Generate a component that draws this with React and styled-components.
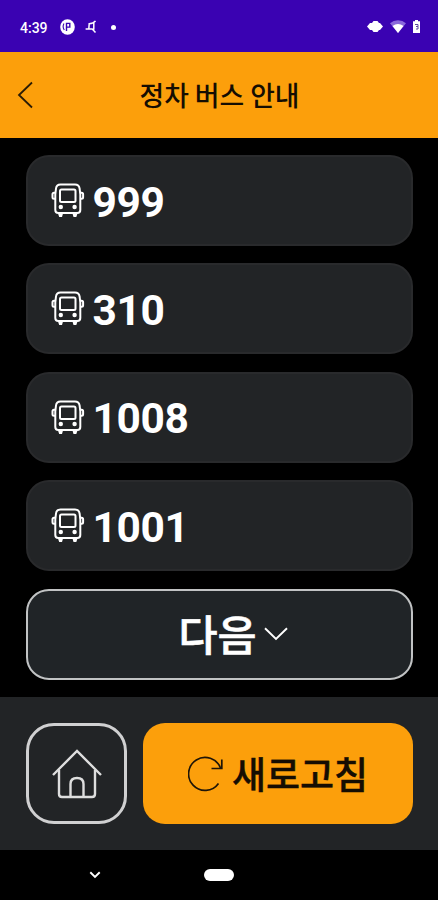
import styled, { createGlobalStyle } from 'styled-components'

const buses = ['999', '310', '1008', '1001']

export default function App() {
  return (
    <>
      <GlobalStyle />
      <Screen>
        <StatusBar>
          <StatusGroup>
            <Clock>4:39</Clock>
            <AppIcon />
            <SignalIcon />
            <StatusDot />
          </StatusGroup>
          <StatusIcons />
        </StatusBar>

        <Header>
          <BackButton aria-label="뒤로">
            <svg width="17" height="28" viewBox="0 0 17 28">
              <path d="M15 1.5 2 14l13 12.5" fill="none" stroke="#2b1c05" strokeWidth="1.8" />
            </svg>
          </BackButton>
          <Title>정차 버스 안내</Title>
        </Header>

        <BusList>
          {buses.map((number) => (
            <BusCard key={number}>
              <BusIcon />
              <BusNumber>{number}</BusNumber>
            </BusCard>
          ))}
          <NextButton>
            <NextLabel>다음</NextLabel>
            <svg width="24" height="14" viewBox="0 0 24 14">
              <path d="M1 1.2 12 12 23 1.2" fill="none" stroke="#fff" strokeWidth="1.9" />
            </svg>
          </NextButton>
        </BusList>

        <Footer>
          <HomeButton aria-label="홈">
            <HomeIcon />
          </HomeButton>
          <RefreshButton>
            <RefreshIcon />
            <RefreshLabel>새로고침</RefreshLabel>
          </RefreshButton>
        </Footer>

        <NavBar>
          <svg width="12" height="8" viewBox="0 0 12 8">
            <path d="M1.3 1.3 6 5.9l4.7-4.6" fill="none" stroke="#fff" strokeWidth="1.9" />
          </svg>
          <NavPill />
          <span />
        </NavBar>
      </Screen>
    </>
  )
}

function AppIcon() {
  return (
    <svg width="15" height="16" viewBox="0 0 15 16">
      <ellipse cx="7.5" cy="8" rx="7.3" ry="7.8" fill="#fff" />
      <path d="M4 4.500c-1.200 2-1 4.500.3 6.500" fill="none" stroke="#3a02b2" strokeWidth="1.1" />
      <path d="M6.500 12V4.400h3.300v3.700H7" fill="none" stroke="#3a02b2" strokeWidth="1.400" />
    </svg>
  )
}

function SignalIcon() {
  return (
    <svg width="12" height="14" viewBox="0 0 12 14">
      <path d="M10.500.8C9.400 2.400 7 3.600 4.200 3.800L3.800 9H.6M3.800 9h3.400l3.300 3.500M8.800 2.300v7.500" fill="none" stroke="#fff" strokeWidth="1.5" />
    </svg>
  )
}

function StatusIcons() {
  return (
    <svg width="54" height="16" viewBox="0 0 54 16">
      <path d="M0 7.500 3 4h2l1.500-2h4L12 4h1l3 3.500-3 3.500h-1l-1.500 2h-4L5 11H3z" fill="#fff" />
      <path d="M23 4.200a12 12 0 0 1 16 0L31 14z" fill="#8a68db" />
      <path d="M25.500 7a9 9 0 0 1 11 0L31 14z" fill="#fff" />
      <path d="M46 2.300h2V1h3v1.300h2V14h-7z" fill="#fff" />
      <path d="M48 5.500h3v2h-2m2 0v2.500h-2" fill="none" stroke="#5b459c" />
    </svg>
  )
}

function BusIcon() {
  return (
    <svg width="34" height="35" viewBox="0 0 34 35" fill="none" stroke="#fff" strokeWidth="2">
      <path d="M9.500 1.500h14.500q4 0 4.600 4l.7 6V27q0 3-3 3h-19q-3 0-3-3V11.500l.7-6q.5-4 4.500-4z" />
      <rect x="9" y="6.500" width="15.500" height="12.500" rx="1.500" />
      <path d="M4.200 9.800H3q-1.500 0-1.500 1.500v3q0 1.500 1.500 1.500h1.200M29.400 9.800h1.200q1.500 0 1.500 1.500v3q0 1.500-1.500 1.500h-1.200" />
      <path d="M7 30.500h5l-1 3.500H8.200zM21.500 30.500h5L25.300 34h-2.800z" fill="#fff" stroke="none" />
      <circle cx="9.800" cy="24" r="2.200" fill="#fff" stroke="none" />
      <circle cx="23.600" cy="24" r="2.200" fill="#fff" stroke="none" />
    </svg>
  )
}

function HomeIcon() {
  return (
    <svg width="50" height="50" viewBox="0 0 50 50" fill="none" stroke="#dedede" strokeWidth="2.400">
      <path d="M1 26 25 2l24 24" />
      <path d="M7 21v24q0 3 3 3h30q3 0 3-3V21" />
      <path d="M18.500 48V35q0-6 6.500-6t6.500 6v13" />
    </svg>
  )
}

function RefreshIcon() {
  return (
    <svg width="35" height="36" viewBox="0 0 35 36" fill="none" stroke="#1e1508" strokeWidth="1.700">
      <path d="M30.500 27.500A16.500 16.500 0 1 1 32.500 12" />
      <path d="M33.800 3.500V12.500H23.500" />
    </svg>
  )
}

const GlobalStyle = createGlobalStyle`
  * {
    box-sizing: border-box;
  }

  body {
    margin: 0;
    background: #000;
    font-family: Roboto, 'Noto Sans CJK KR', sans-serif;
  }

  button {
    padding: 0;
    border: 0;
    background: none;
    font: inherit;
  }

  svg {
    display: block;
    flex: none;
  }
`

const Screen = styled.main`
  display: flex;
  flex-direction: column;
  width: 438px;
  height: 900px;
  overflow: hidden;
  background: #000;
`

const StatusBar = styled.div`
  display: flex;
  align-items: center;
  justify-content: space-between;
  height: 52px;
  padding: 2px 17px 0 20px;
  background: #3a02b2;
`

const StatusGroup = styled.div`
  display: flex;
  align-items: center;
`

const Clock = styled.span`
  width: 28px;
  margin-right: 12px;
  padding-top: 2px;
  font-size: 14px;
  font-weight: 500;
  line-height: 16px;
  color: #fff;

  & + svg {
    margin-right: 10px;
  }
`

const StatusDot = styled.span`
  width: 5px;
  height: 5px;
  margin-left: 14px;
  border-radius: 50%;
  background: #fff;
`

const Header = styled.header`
  display: grid;
  grid-template-columns: 60px 1fr 60px;
  align-items: center;
  height: 85.500px;
  background: #fc9f0b;
`

const BackButton = styled.button`
  padding-left: 17px;
`

const Title = styled.h1`
  margin: 0;
  padding-left: 1px;
  font-family: 'Noto Sans CJK KR', sans-serif;
  font-size: 26.800px;
  font-weight: 500;
  line-height: 40px;
  text-align: center;
  white-space: nowrap;
  color: #150d02;
`

const BusList = styled.section`
  display: grid;
  grid-auto-rows: 91px;
  gap: 17.400px;
  height: 559.500px;
  padding: 17.500px 25px 0 26px;
`

const BusCard = styled.article`
  display: flex;
  align-items: center;
  gap: 8px;
  padding-left: 22.500px;
  border: 2px solid #292a2c;
  border-radius: 23px;
  background: #222426;
`

const BusNumber = styled.span`
  padding-top: 4px;
  font-size: 42.500px;
  font-weight: 700;
  line-height: 50px;
  letter-spacing: -0.4px;
  color: #fff;
`

const NextButton = styled.button`
  display: flex;
  align-items: center;
  justify-content: center;
  gap: 7px;
  padding-left: 27px;
  border: 2px solid #c1c3c4;
  border-radius: 23px;
  background: #202427;
`

const NextLabel = styled.span`
  margin-top: -2px;
  font-family: 'Noto Sans CJK KR', sans-serif;
  font-size: 42.500px;
  font-weight: 500;
  line-height: 60px;
  color: #fff;
  -webkit-text-stroke: 0.6px #fff;
`

const Footer = styled.footer`
  display: flex;
  gap: 16px;
  height: 153px;
  padding: 26px 25px 26px 26px;
  background: #222426;
`

const HomeButton = styled.button`
  display: grid;
  place-items: center;
  width: 101px;
  border: 3px solid #d0d0d1;
  border-radius: 28px;
`

const RefreshButton = styled.button`
  display: flex;
  flex: 1;
  align-items: center;
  justify-content: center;
  gap: 9px;
  border-radius: 22px;
  background: #fc9f0b;
`

const RefreshLabel = styled.span`
  margin-top: -2px;
  font-family: 'Noto Sans CJK KR', sans-serif;
  font-size: 37px;
  font-weight: 500;
  line-height: 50px;
  color: #150d02;
  -webkit-text-stroke: 0.4px #150d02;
`

const NavBar = styled.nav`
  display: grid;
  flex: 1;
  grid-template-columns: 12px 30px 12px;
  gap: 103px;
  align-items: center;
  justify-content: center;
`

const NavPill = styled.span`
  height: 12px;
  border-radius: 6px;
  background: #fff;
`
